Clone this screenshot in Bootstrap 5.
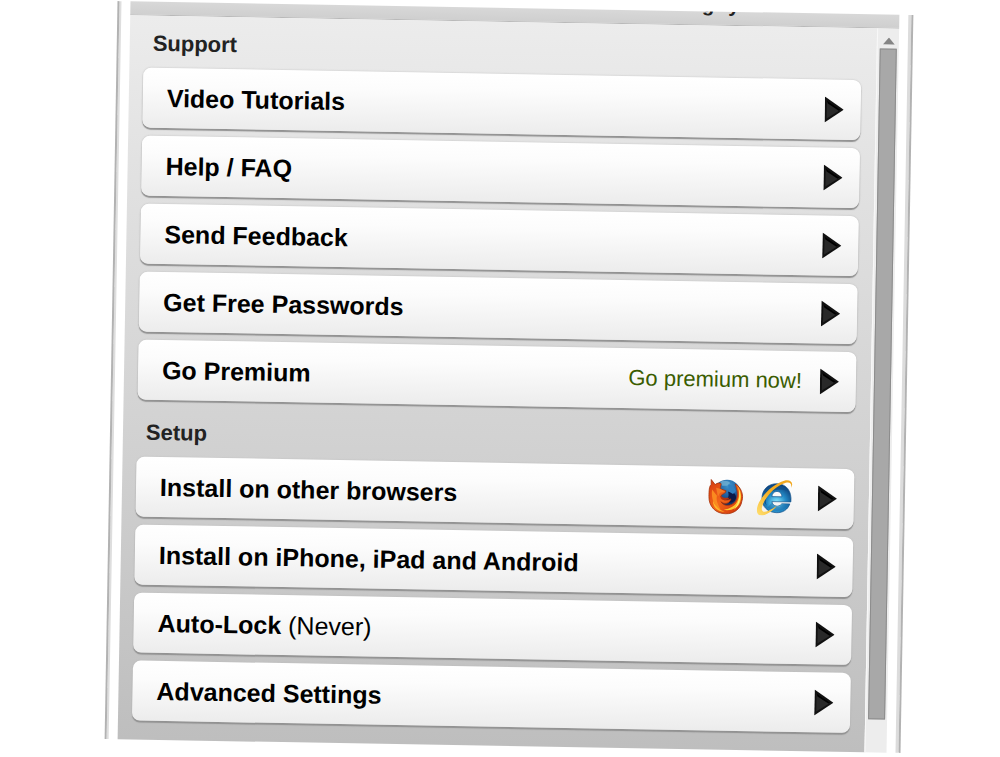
<!DOCTYPE html>
<html lang="en">
<head>
<meta charset="utf-8">
<meta name="viewport" content="width=device-width, initial-scale=1">
<title>Preferences</title>
<link href="https://cdn.jsdelivr.net/npm/bootstrap@5.3.0/dist/css/bootstrap.min.css" rel="stylesheet">
<style>
body { font-family: "Liberation Sans", Arial, sans-serif; background: #fff; min-height: 100vh; overflow-x: hidden; }
/* the whole panel leans one degree clockwise */
.panel { width: 79.6%; margin: 0 9.3% 0 11.1%; transform: rotate(1deg); }
.rail-left { width: 13px; border-left: 2px solid #b2b2b2; box-shadow: inset 2px 0 #dedede; }
.rail-right { width: 14px; border-right: 2px solid #b2b2b2; box-shadow: inset -3px 0 #dcdcdc; }
.topbar { height: 14px; padding: 0 160px 10px 0; gap: 14px; background: linear-gradient(#d8d8d8, #cfcfcf); border-bottom: 1px solid #b9b9b9; font-size: 20px; line-height: 20px; color: #222; }
.pane { padding: 12px 15px 19px 14px; background: linear-gradient(#ececec, #e2e2e2 20%, #d3d3d3 55%, #bebebe); }
.group-title { font-size: 22px; line-height: 32px; font-weight: 700; color: #222; margin: 0 0 8px; padding-left: 9px; }
.rows + .group-title { margin-top: 17px; }
.rows { gap: 8px; }
.entry { height: 60px; padding: 0 17px 0 24px; border-radius: 8px; background: linear-gradient(#fff, #fcfcfc 30%, #ececec); box-shadow: 0 2px 1px #929292, 0 0 2px #bbb; font-size: 25px; line-height: 30px; color: #000; text-decoration: none; }
.entry:hover { color: #000; }
.note { font-size: 22px; color: #3a5c00; margin-right: 18px; }
.arrow { width: 19px; height: 26px; }
.logo { width: 36px; height: 36px; }
.logos { gap: 13px; margin-right: 9px; }
.track { width: 22px; padding: 9px 2px 33px; background: #ededed; border-left: 1px solid #f8f8f8; }
.thumb { background: #a8a8a8; border: 1px solid #8c8c8c; }
</style>
</head>
<body class="pt-2">
<svg class="d-none" aria-hidden="true">
  <defs>
    <symbol id="play" viewBox="0 0 19 26"><path d="M0 0 19 13 0 26Z" fill="#111"/><path d="M2 4 16 13 2 22Z" fill="#292929"/><path d="M2 4 16 13 14 14 3 7Z" fill="#000"/></symbol>
  </defs>
</svg>
<main class="panel d-flex">
  <div class="rail-left flex-shrink-0"></div>
  <div class="flex-grow-1">
    <header class="topbar d-flex justify-content-end align-items-end overflow-hidden fw-bold"><span>g</span><span>y</span></header>
    <div class="d-flex">
      <div class="pane flex-grow-1">
        <h2 class="group-title">Support</h2>
        <nav class="rows d-flex flex-column" aria-label="Support">
          <a class="entry d-flex align-items-center fw-bold" href="#"><span class="me-auto">Video Tutorials</span><svg class="arrow"><use href="#play"/></svg></a>
          <a class="entry d-flex align-items-center fw-bold" href="#"><span class="me-auto">Help / FAQ</span><svg class="arrow"><use href="#play"/></svg></a>
          <a class="entry d-flex align-items-center fw-bold" href="#"><span class="me-auto">Send Feedback</span><svg class="arrow"><use href="#play"/></svg></a>
          <a class="entry d-flex align-items-center fw-bold" href="#"><span class="me-auto">Get Free Passwords</span><svg class="arrow"><use href="#play"/></svg></a>
          <a class="entry d-flex align-items-center fw-bold" href="#"><span class="me-auto">Go Premium</span><span class="note fw-normal">Go premium now!</span><svg class="arrow"><use href="#play"/></svg></a>
        </nav>
        <h2 class="group-title">Setup</h2>
        <nav class="rows d-flex flex-column" aria-label="Setup">
          <a class="entry d-flex align-items-center fw-bold" href="#"><span class="me-auto">Install on other browsers</span>
            <span class="logos d-flex pe-3">
              <svg class="logo" viewBox="0 0 36 36" role="img" aria-label="Firefox">
                <defs>
                  <radialGradient id="globe" cx=".55" cy=".2" r=".8"><stop offset="0" stop-color="#3f95cc"/><stop offset=".5" stop-color="#1b5a9c"/><stop offset="1" stop-color="#0b1c4c"/></radialGradient>
                  <linearGradient id="fur" x1="0" y1="0" x2="1" y2="1"><stop offset="0" stop-color="#d63a10"/><stop offset=".5" stop-color="#f2661a"/><stop offset="1" stop-color="#c92b08"/></linearGradient>
                </defs>
                <circle cx="19" cy="15" r="14" fill="url(#globe)"/>
                <path d="M12 3C16 1 20 2 22 4L19 7 14 7Z" fill="#79b7d6" opacity=".7"/>
                <path d="M20 13C25 12 29 15 28 20 26 25 19 25 15 21 19 21 22 19 20 13Z" fill="#0a1a4a"/>
                <path d="M20 6C24 5 26 8 28 12L25 15 21 13Z" fill="#2f7fc0"/>
                <path d="M3 1 7 6C9 4 12 4 13 5L12 10 18 12C18 15 14 15 13 17 14 22 19 22 23 20 22 25 16 26 13 23 17 29 27 27 29 19 30 14 29 10 27 5 33 8 36 16 34 22 33 30 26 35 18 35 8 35 1 28 1 18 1 12 1 8 3 6Z" fill="url(#fur)" stroke="#a5330c" stroke-width=".8"/>
                <path d="M29 7C34 12 35 23 29 28 25 31 20 32 16 31 22 30 28 27 30 21 32 16 31 10 29 7Z" fill="#ffc72e"/>
                <path d="M31 11C34 18 32 26 26 31 31 25 32 18 31 11Z" fill="#fff07a"/>
                <path d="M4 11C3 20 6 27 13 31 10 25 8 22 9 17Z" fill="#fa8a20"/>
                <path d="M5 22C7 27 11 31 17 33 9 33 5 28 5 22Z" fill="#ffb328"/>
                <path d="M8 9 12 10 17 13 12 14 10 18Z" fill="#f57b22"/>
                <path d="M12 17 16 19 22 19C18 23 13 22 12 17Z" fill="#b0330f"/>
              </svg>
              <svg class="logo" viewBox="0 0 36 36" role="img" aria-label="Internet Explorer">
                <defs>
                  <radialGradient id="sea" cx=".5" cy=".65" r=".65"><stop offset="0" stop-color="#8cecff"/><stop offset=".5" stop-color="#238bc7"/><stop offset="1" stop-color="#0c3a74"/></radialGradient>
                  <linearGradient id="gold" x1="0" y1="1" x2="1" y2="0"><stop offset="0" stop-color="#ffe071"/><stop offset=".5" stop-color="#f6ae22"/><stop offset="1" stop-color="#f0a51c"/></linearGradient>
                </defs>
                <path fill-rule="evenodd" d="M20 4C29 4 35 11 34 22H15C16 27 22 28 25 24H33C31 30 26 33 20 33 11 33 5 27 5 19 5 10 11 4 20 4ZM15 17H25C25 10 15 10 15 17Z" fill="url(#sea)" stroke="#15558e" stroke-width=".7"/>
                <path d="M9 12C13 5 24 4 30 11 24 9 17 9 12 14 9 18 8 22 10 26 6 22 6 17 9 12Z" fill="#125089"/>
                <path d="M15 23C18 29 23 28 25 25L32 24C29 31 18 34 11 28Z" fill="#1b6aa8" opacity=".5"/>
                <path d="M34 8C37 3 33-1 27 1 17 4 5 15 1 26-2 35 3 39 11 34 15 32 18 29 20 26 12 32 5 35 5 29 6 21 16 8 26 4 32 1 35 3 34 8Z" fill="url(#gold)"/>
              </svg>
            </span>
            <svg class="arrow"><use href="#play"/></svg></a>
          <a class="entry d-flex align-items-center fw-bold" href="#"><span class="me-auto">Install on iPhone, iPad and Android</span><svg class="arrow"><use href="#play"/></svg></a>
          <a class="entry d-flex align-items-center fw-bold" href="#"><span class="me-auto">Auto-Lock <span class="fw-normal">(Never)</span></span><svg class="arrow"><use href="#play"/></svg></a>
          <a class="entry d-flex align-items-center fw-bold" href="#"><span class="me-auto">Advanced Settings</span><svg class="arrow"><use href="#play"/></svg></a>
        </nav>
      </div>
      <div class="track d-flex flex-column flex-shrink-0" aria-hidden="true">
        <svg class="align-self-center flex-shrink-0 mb-1" width="12" height="7" viewBox="0 0 12 7"><path d="M0 7 6 0 12 7Z" fill="#858585"/></svg>
        <div class="thumb flex-grow-1"></div>
      </div>
    </div>
  </div>
  <div class="rail-right flex-shrink-0"></div>
</main>
<script src="https://cdn.jsdelivr.net/npm/bootstrap@5.3.0/dist/js/bootstrap.bundle.min.js"></script>
</body>
</html>
